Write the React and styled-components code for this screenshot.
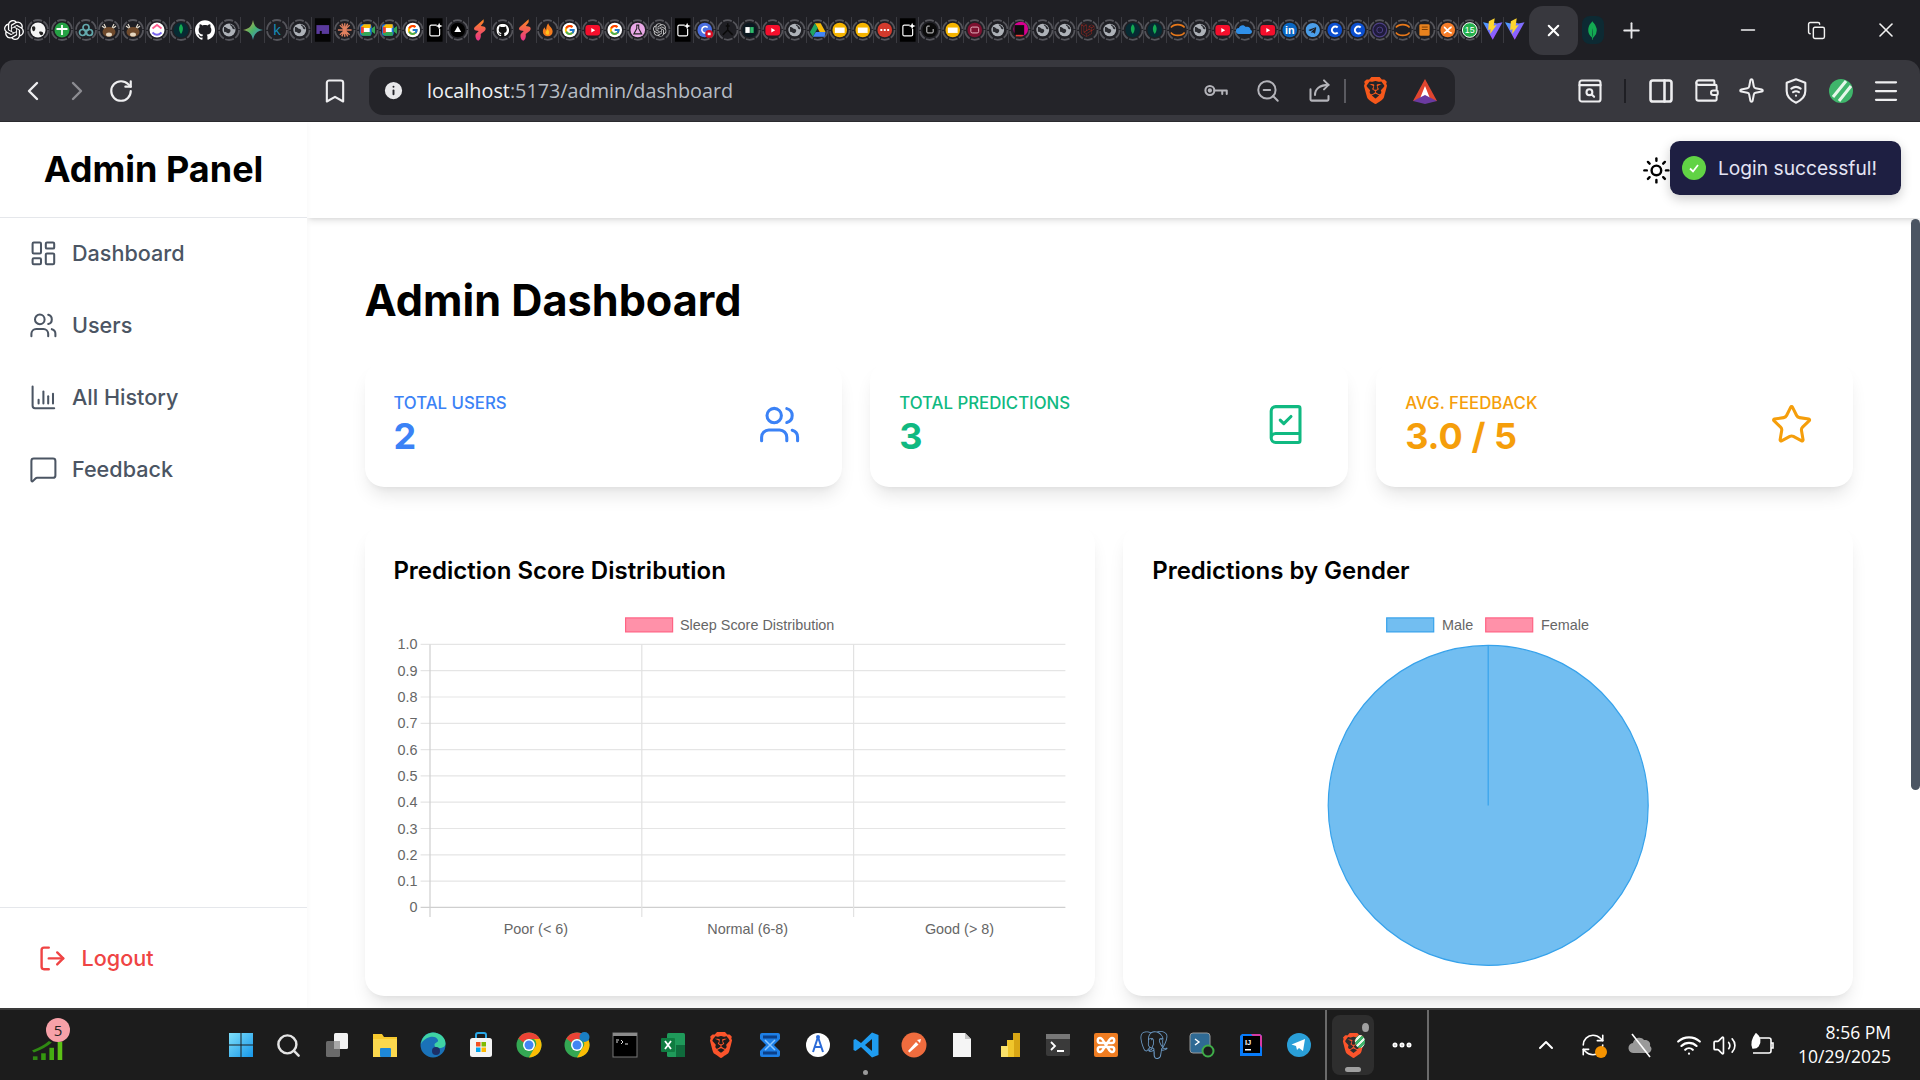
import React from "react";
import styled, { createGlobalStyle } from "styled-components";
import {
  LayoutDashboard,
  Users,
  MessageSquare,
  LogOut,
  BookCheck,
  Star,
  Sun,
  ChevronLeft,
  ChevronRight,
  RotateCw,
  Bookmark,
  Info,
  ZoomOut,
  X,
  Plus,
  Minus,
  Copy,
  PanelRight,
  Wallet,
  Sparkle,
  Menu,
  Search,
  ChevronUp,
  RefreshCw,
  Wifi,
  Volume2,
  MoreHorizontal,
} from "lucide-react";
import {
  SiOpenai,
  SiMongodb,
  SiGithub,
  SiLaravel,
  SiBrave,
  SiPostgresql,
} from "react-icons/si";
import { FaTelegram } from "react-icons/fa";
import { FcGoogle } from "react-icons/fc";

const GlobalStyle = createGlobalStyle`
  html, body {
    margin: 0;
    height: 100%;
    overflow: hidden;
    background: #fff;
  }
  * {
    box-sizing: border-box;
  }
  #root {
    height: 100%;
  }
`;

const Screen = styled.div`
  display: flex;
  flex-direction: column;
  width: 1920px;
  height: 1080px;
  font-family: Inter, "Liberation Sans", sans-serif;
  background: #1f1f24;
`;

/* browser chrome */

const TabStrip = styled.div`
  display: flex;
  align-items: center;
  height: 60px;
  padding-left: 1.4px;
  flex: none;
`;

const TabCell = styled.div`
  display: flex;
  align-items: center;
  justify-content: center;
  width: ${(p) => (p.$wide ? 23.9 : 22.5)}px;
  height: 26px;
  flex: none;
  border-left: 1px solid ${(p) => (p.$first ? "transparent" : "#3a3a40")};
`;

const ActiveTab = styled.div`
  display: flex;
  align-items: center;
  justify-content: center;
  width: 49px;
  height: 49px;
  margin-left: 3px;
  border-radius: 14px;
  background: #38383e;
  color: #fff;
  flex: none;
`;

const PinnedTile = styled.div`
  display: flex;
  align-items: center;
  justify-content: center;
  width: 22px;
  height: 28px;
  margin-left: 4px;
  border-radius: 8px;
  background: #0d2a33;
  color: #13aa52;
  flex: none;
`;

const NewTab = styled.div`
  display: flex;
  justify-content: center;
  width: 34px;
  margin-left: 11px;
  color: #e8e8ea;
`;

const WindowControls = styled.div`
  display: flex;
  align-items: center;
  margin-left: auto;
`;

const WindowButton = styled.div`
  display: flex;
  justify-content: center;
  width: 69px;
  color: #f2f2f2;
`;

const Toolbar = styled.div`
  display: flex;
  align-items: center;
  height: 62px;
  padding-left: 11px;
  flex: none;
  background: #38383e;
  border-radius: 14px 14px 0 0;
  border-bottom: 1px solid #2a2a2e;
`;

const ToolButton = styled.div`
  display: flex;
  align-items: center;
  justify-content: center;
  width: 44px;
  height: 44px;
  flex: none;
  color: ${(p) => p.$color || "#eeeef0"};
`;

const BookmarkSlot = styled(ToolButton)`
  margin-left: 170px;
  margin-right: 12px;
`;

const UrlPill = styled.div`
  display: flex;
  align-items: center;
  width: 1086px;
  height: 48px;
  padding-left: 13px;
  flex: none;
  border-radius: 14px;
  background: #242429;
`;

const InfoSlot = styled.div`
  display: flex;
  color: #e8e8ea;
  margin-right: 22px;
`;

const UrlText = styled.div`
  font-family: "Open Sans", "Liberation Sans", sans-serif;
  font-size: 19.8px;
  color: #b6bcc4;
  white-space: nowrap;
`;

const UrlHost = styled.span`
  color: #eef1f4;
`;

const PillActions = styled.div`
  display: flex;
  align-items: center;
  margin-left: auto;
  padding-right: 9px;
`;

const PillButton = styled.div`
  display: flex;
  justify-content: center;
  width: ${(p) => p.$w || 51}px;
  color: #b4b4ba;
`;

const ToolDivider = styled.div`
  width: 2px;
  height: 24px;
  margin: 0 ${(p) => p.$gap || 0}px;
  background: ${(p) => p.$color || "#5a5a60"};
  flex: none;
`;

const ToolRight = styled.div`
  display: flex;
  align-items: center;
  margin-left: 112px;
`;

const ToolRightButton = styled.div`
  display: flex;
  justify-content: center;
  width: 45px;
  color: #eeeef0;
  flex: none;
`;

/* app page */

const Page = styled.div`
  display: flex;
  height: 886px;
  flex: none;
  background: #fff;
  overflow: hidden;
`;

const Sidebar = styled.aside`
  display: flex;
  flex-direction: column;
  width: 307px;
  flex: none;
  background: #fff;
  box-shadow: 0 0 6px rgba(0, 0, 0, 0.04);
  z-index: 3;
`;

const Brand = styled.div`
  display: flex;
  align-items: center;
  justify-content: center;
  height: 96px;
  padding-bottom: 2px;
  flex: none;
  border-bottom: 1.2px solid #e5e7eb;
  font-size: 36px;
  font-weight: 700;
  color: #000;
`;

const Nav = styled.nav`
  display: flex;
  flex-direction: column;
  gap: 24px;
  padding-top: 11px;
  flex: 1;
`;

const NavItem = styled.div`
  display: flex;
  align-items: center;
  gap: 14.4px;
  height: 48px;
  padding-left: 28.8px;
  font-size: 21.6px;
  font-weight: 500;
  color: #4b5563;
`;

const SidebarFoot = styled.div`
  display: flex;
  align-items: center;
  gap: 14.4px;
  height: 101px;
  padding: 0 0 0 38.4px;
  flex: none;
  border-top: 1.2px solid #e5e7eb;
  font-size: 21.6px;
  font-weight: 500;
  color: #ef4444;
`;

const Main = styled.div`
  display: flex;
  flex-direction: column;
  flex: 1;
  min-width: 0;
  position: relative;
`;

const Header = styled.header`
  display: flex;
  align-items: center;
  justify-content: flex-end;
  height: 96px;
  padding-right: 249px;
  flex: none;
  background: #fff;
  box-shadow: 0 4px 7px -1px rgba(0, 0, 0, 0.1), 0 2px 4px -2px rgba(0, 0, 0, 0.1);
  z-index: 2;
  color: #000;
`;

const Toast = styled.div`
  position: absolute;
  top: 19px;
  right: 19px;
  display: flex;
  align-items: center;
  gap: 12px;
  width: 231px;
  height: 54px;
  padding-left: 12px;
  border-radius: 9.6px;
  background: #1e1f42;
  color: #e4e4f4;
  font-size: 19.2px;
  box-shadow: 0 4px 12px rgba(0, 0, 0, 0.2);
  z-index: 5;
`;

const ToastIcon = styled.div`
  display: flex;
  align-items: center;
  justify-content: center;
  width: 24px;
  height: 24px;
  border-radius: 50%;
  background: #61d345;
  flex: none;
`;

const Content = styled.main`
  flex: 1;
  min-height: 0;
  overflow: hidden;
  padding: 57.6px 66.6px 0 57.6px;
  background: #fff;
`;

const ScrollThumb = styled.div`
  position: absolute;
  top: 97px;
  right: 0;
  width: 9px;
  height: 571px;
  border-radius: 5px;
  background: #4b5563;
  z-index: 4;
`;

const PageTitle = styled.h1`
  margin: 0 0 38.4px;
  font-size: 43.2px;
  line-height: 48px;
  font-weight: 700;
  color: #000;
`;

const StatGrid = styled.div`
  display: grid;
  grid-template-columns: repeat(3, 1fr);
  gap: 28.8px;
`;

const StatCard = styled.div`
  display: flex;
  align-items: center;
  justify-content: space-between;
  padding: 28.8px 40px 28.8px 28.8px;
  border-radius: 19.2px;
  background: #fff;
  color: ${(p) => p.$color};
  box-shadow: 0 12px 18px -4px rgba(0, 0, 0, 0.1), 0 5px 7px -5px rgba(0, 0, 0, 0.08);
`;

const StatLabel = styled.div`
  font-size: 16.8px;
  line-height: 24px;
  font-weight: 500;
  text-transform: uppercase;
`;

const StatValue = styled.div`
  font-size: 36px;
  line-height: 43.2px;
  font-weight: 700;
`;

const ChartGrid = styled.div`
  display: grid;
  grid-template-columns: repeat(2, 1fr);
  gap: 28.8px;
  margin-top: 38.4px;
`;

const ChartCard = styled.section`
  padding: 28.8px;
  border-radius: 19.2px;
  background: #fff;
  box-shadow: 0 12px 18px -4px rgba(0, 0, 0, 0.1), 0 5px 7px -5px rgba(0, 0, 0, 0.08);
`;

const ChartTitle = styled.h2`
  margin: 0 0 19.8px;
  font-size: 24px;
  line-height: 33.6px;
  font-weight: 600;
  color: #000;
`;

const ChartSvg = styled.svg`
  display: block;
  width: 672px;
  height: 360px;
  overflow: visible;
  font-family: "Liberation Sans", Arial, sans-serif;
  font-size: 14.4px;
  fill: #666;
`;

/* taskbar */

const Taskbar = styled.footer`
  display: flex;
  align-items: center;
  height: 72px;
  flex: none;
  background: #1c1c1c;
  border-top: 2px solid #3a3a3a;
`;

const SignalWidget = styled.div`
  position: relative;
  display: flex;
  align-items: flex-end;
  width: 216.5px;
  height: 70px;
  padding: 0 0 20px 32px;
  flex: none;
`;

const SignalBadge = styled.div`
  position: absolute;
  top: 8px;
  left: 46px;
  display: flex;
  align-items: center;
  justify-content: center;
  width: 24px;
  height: 24px;
  border-radius: 50%;
  background: #f7a1a8;
  color: #222;
  font-family: "Open Sans", sans-serif;
  font-size: 15px;
`;

const TaskCell = styled.div`
  position: relative;
  display: flex;
  align-items: center;
  justify-content: center;
  width: 48.1px;
  height: 70px;
  flex: none;
`;

const RunDot = styled.div`
  position: absolute;
  bottom: 5px;
  left: 21.5px;
  width: 5px;
  height: 5px;
  border-radius: 50%;
  background: #9a9a9a;
`;

const Separator = styled.div`
  width: 2px;
  height: 70px;
  background: #6a6a6a;
  flex: none;
  margin-left: ${(p) => p.$left || 0}px;
`;

const ActiveApp = styled.div`
  position: relative;
  display: flex;
  align-items: center;
  justify-content: center;
  width: 42px;
  height: 60px;
  margin-left: 5px;
  border-radius: 8px;
  background: #2e2e2e;
  flex: none;
`;

const ActivePill = styled.div`
  position: absolute;
  bottom: 3px;
  left: 13px;
  width: 16px;
  height: 5px;
  border-radius: 3px;
  background: #a0a0a0;
`;

const AppBadge = styled.div`
  position: absolute;
  top: 8px;
  right: 5px;
  width: 7px;
  height: 9px;
  border-radius: 50%;
  background: #a0a0a0;
`;

const AppExtension = styled.div`
  position: absolute;
  top: 20px;
  right: 9px;
  width: 10px;
  height: 13px;
  border-radius: 50%;
  background: repeating-linear-gradient(135deg, #3fb56b 0 3px, #e6f7ea 3px 5px);
`;

const DotsCell = styled.div`
  display: flex;
  justify-content: center;
  width: 49px;
  margin-left: 3px;
  color: #fff;
  flex: none;
`;

const Tray = styled.div`
  display: flex;
  align-items: center;
  color: #fff;
  margin-left: 93px;
`;

const TrayCell = styled.div`
  position: relative;
  display: flex;
  justify-content: center;
  width: ${(p) => p.$w || 47.5}px;
  margin-left: ${(p) => p.$gap || 0}px;
  flex: none;
`;

const TrayDot = styled.div`
  position: absolute;
  right: 10px;
  bottom: 0;
  width: 12px;
  height: 12px;
  border-radius: 50%;
  background: #f59300;
`;

const Clock = styled.div`
  margin-left: auto;
  padding: 0 29px 2px 0;
  font-family: "Open Sans", "Liberation Sans", sans-serif;
  font-size: 17.5px;
  line-height: 24px;
  text-align: right;
  color: #fff;
`;

/* small drawings */

const Globe = () => (
  <g>
    <circle cx="11" cy="12" r="6.5" fill="#aeb2b8" />
    <path d="M6 9c3 0 3 2 5 2s2 3 0 4-3-2-5-1zM12 6c2 1 4 2 5 5-2 1-3-1-3-2s-2-1-2-3z" fill="#2a2b30" />
  </g>
);

const YouTube = () => (
  <g>
    <rect x="3.5" y="7" width="15" height="10.5" rx="3" fill="#f50f2c" />
    <path d="M9.5 10v4.5l4-2.2z" fill="#fff" />
  </g>
);

const GoogleG = () => (
  <g>
    <circle cx="11" cy="12" r="7.5" fill="#fff" />
    <FcGoogle x="5" y="6" size="12" />
  </g>
);

const YellowNote = () => (
  <g>
    <circle cx="11" cy="12" r="7.5" fill="#f5b400" />
    <rect x="6" y="9.5" width="10" height="5.5" fill="#fff" />
  </g>
);

const CStar = () => (
  <g>
    <rect x="3" y="0" width="16" height="24" fill="#000" />
    <path d="M13 7H7.5A1.5 1.5 0 0 0 6 8.5v8A1.5 1.5 0 0 0 7.5 18h7a1.5 1.5 0 0 0 1.5-1.5V11" fill="none" stroke="#fff" strokeWidth="1.2" />
    <path d="M15.5 4.5l1 2.5 2.5 1-2.5 1-1 2.5-1-2.5-2.5-1 2.5-1z" fill="#fff" />
  </g>
);

const Eclipse = () => (
  <g fill="none" stroke="#e8781a" strokeWidth="1.6">
    <path d="M4 9.5c3-4 11-4 14 0" />
    <path d="M4 14.5c3 4 11 4 14 0" />
  </g>
);

const Mongo = () => (
  <g>
    <circle cx="11" cy="12" r="7.5" fill="#062b33" />
    <path d="M11 6c2.5 2.5 2.6 6.5 0 10-2.6-3.5-2.5-7.5 0-10z" fill="#13aa52" />
  </g>
);

const MeetCam = () => (
  <g>
    <rect x="4" y="7" width="10" height="10" rx="1.5" fill="#fff" stroke="#1a73e8" strokeWidth="2" />
    <path d="M4 9l3-3h7v4H4z" fill="#fbbc04" />
    <path d="M4 14v2l2 2h8v-4z" fill="#34a853" />
    <path d="M15 10.5l3.5-2.5v8l-3.5-2.5z" fill="#34a853" />
    <path d="M4 9h3v6H4z" fill="#ea4335" />
  </g>
);

const Spark = () => (
  <path d="M15 1 6 9c-1.5 1.5-1 3 1 3.5l3 .5-3 3c-1 2 0 6 2.5 7 2-1 3-4 2.5-7l4-3c2-2 1-4-1-4.5l-3-.5 3-4z" fill="url(#spark)" />
);

const Fire = () => (
  <g>
    <path d="M11.5 5c.5 3 4.5 4.5 4.5 8.5a5 5 0 0 1-10 0c0-2 1-3.2 2-4.2 0 1.5.6 2.2 1.4 2.5C9.4 9.5 10 7 11.5 5z" fill="#f57c1f" />
    <path d="M10.5 11c1.5 1.5 2.5 2.5 1.5 5.5-2 1-4-1-3-3 .7-.7 1.3-1.3 1.5-2.5z" fill="#ffc21a" />
  </g>
);

const Gemini = () => (
  <path d="M11 2c1 6 4 9 10 10-6 1-9 4-10 10-1-6-4-9-10-10 6-1 9-4 10-10z" fill="url(#gemini)" />
);

const Vite = () => (
  <g>
    <path d="M1 4l10 18L21 4l-6 1.3-4-1-4 1z" fill="url(#vite)" />
    <path d="M13 0 7 3l-.7 9 2.5-.8-.5 4.8L15 7l-3 .6z" fill="#ffd62e" />
  </g>
);

const glyphs = {
  gpt: () => <SiOpenai x="1" y="2" size="20" color="#fff" />,
  panda: () => (
    <g>
      <circle cx="11" cy="12" r="7.5" fill="#f4f4f4" />
      <path d="M5 9c3-2 4 1 3 3s-3 2-3-3zM12 14c2-1 5 0 4 2s-3 2-4-2z" fill="#222" />
    </g>
  ),
  plus: () => (
    <g>
      <circle cx="11" cy="12" r="7.5" fill="#25a244" />
      <path d="M11 7v10M5.5 11h11" stroke="#fff" strokeWidth="1.8" />
    </g>
  ),
  rings: () => (
    <g fill="none" stroke="#63a9ad" strokeWidth="1.7">
      <circle cx="11" cy="9.5" r="3" />
      <circle cx="7.5" cy="14.5" r="3" />
      <circle cx="14.5" cy="14.5" r="3" />
    </g>
  ),
  deer: () => (
    <g>
      <path d="M6 6l2 4M16 6l-2 4M4 8l4 3M18 8l-4 3" stroke="#e4ddcf" strokeWidth="1.2" />
      <ellipse cx="11" cy="14" rx="6.5" ry="5" fill="#6f4a2c" />
      <ellipse cx="11" cy="16.5" rx="3" ry="2" fill="#e6d7c0" />
    </g>
  ),
  clickup: () => (
    <g>
      <circle cx="11" cy="12" r="7.5" fill="#fff" />
      <path d="M6.5 10.5 11 7l4.5 3.5" fill="none" stroke="#ff5d8f" strokeWidth="1.8" />
      <path d="M6.5 14.5c3 3 6 3 9 0" fill="none" stroke="#7b68ee" strokeWidth="1.8" />
    </g>
  ),
  mongo: Mongo,
  github: () => <SiGithub x="1" y="2" size="20" color="#fff" />,
  globe: Globe,
  gemini: Gemini,
  k: () => (
    <text x="11" y="17" textAnchor="middle" fontFamily="Liberation Sans" fontSize="15" fill="#1688b4">k</text>
  ),
  cyber: () => (
    <g>
      <rect x="3" y="0" width="16" height="24" fill="#050505" />
      <rect x="4.5" y="7" width="13" height="9" fill="#5a3a9c" />
      <rect x="8" y="13" width="2" height="4" fill="#050505" />
    </g>
  ),
  claude: () => (
    <path d="M11 5v14M4 12h14M6 7l10 10M16 7 6 17M8 5.5l6 13M14 5.5l-6 13" stroke="#e0805f" strokeWidth="1.4" />
  ),
  meet: MeetCam,
  google: GoogleG,
  cstar: CStar,
  tri: () => (
    <g>
      <circle cx="11" cy="12" r="7.5" fill="#000" />
      <path d="M11 8l3.5 6h-7z" fill="#fff" />
    </g>
  ),
  spark: Spark,
  githubRing: () => (
    <g>
      <circle cx="11" cy="12" r="7.5" fill="#111" />
      <SiGithub x="4.5" y="5.5" size="13" color="#fff" />
    </g>
  ),
  fire: Fire,
  yt: YouTube,
  flask: () => (
    <g>
      <circle cx="11" cy="12" r="7.5" fill="#e9a8e6" />
      <path d="M9.5 7h3M10 7v3.5L7 16h8l-3-5.5V7" fill="none" stroke="#222" strokeWidth="1.1" />
    </g>
  ),
  gptGrey: () => <SiOpenai x="4" y="5" size="14" color="#c9c9c9" />,
  gred: () => (
    <g>
      <circle cx="11" cy="12" r="7.5" fill="#4a6ee0" />
      <path d="M8 12a3.5 3.5 0 0 1 6-2.5M8 12a3.5 3.5 0 0 0 4 3" fill="none" stroke="#fff" strokeWidth="1.6" />
      <circle cx="15.5" cy="16" r="4" fill="#d50f25" />
      <rect x="14" y="14.7" width="3" height="2.6" fill="#fff" />
    </g>
  ),
  tripod: () => <path d="M11 5v7L6 17M11 12l5 5M9 8h4" fill="none" stroke="#0a0a0a" strokeWidth="1.5" />,
  h: () => (
    <g>
      <circle cx="11" cy="12" r="7.5" fill="#0b1820" />
      <rect x="6.5" y="9" width="4.5" height="6" fill="#fff" />
      <rect x="11.5" y="9" width="3.5" height="6" fill="#2ebd6b" />
    </g>
  ),
  drive: () => (
    <g>
      <path d="M8 5h6l5 9h-6z" fill="#f9bc07" />
      <path d="M8 5 3 14l3 5 5-9z" fill="#1fa463" />
      <path d="M6 19h12l1-5H9z" fill="#4285f4" />
    </g>
  ),
  note: YellowNote,
  dots: () => (
    <g>
      <circle cx="11" cy="12" r="7.5" fill="#d33a2c" />
      <path d="M6.5 12h9" stroke="#fff" strokeWidth="2" strokeDasharray="2 1.5" />
    </g>
  ),
  roundC: () => (
    <g>
      <circle cx="11" cy="12" r="7.5" fill="#0a0a0a" />
      <path d="M11 8H9a1 1 0 0 0-1 1v5a1 1 0 0 0 1 1h4.5a1 1 0 0 0 1-1v-3" fill="none" stroke="#ddd" strokeWidth="1" />
    </g>
  ),
  maroon: () => (
    <g>
      <circle cx="11" cy="12" r="7.5" fill="#7d1130" />
      <rect x="7" y="9" width="8" height="6" rx="1.5" fill="none" stroke="#e9b7c3" strokeWidth="1" />
    </g>
  ),
  pink: () => (
    <g>
      <circle cx="12" cy="11" r="7.5" fill="#d6008f" />
      <rect x="5.5" y="7" width="10" height="10" fill="#0d0d0d" />
      <rect x="7" y="17" width="7" height="1.5" fill="#f03a2e" />
    </g>
  ),
  laravel: () => <SiLaravel x="4" y="5" size="14" color="#a8281f" />,
  eclipse: Eclipse,
  onedrive: () => (
    <path d="M5 16a3 3 0 0 1 0-6c1-3 5-4 7-1 3-1 5 1 5 3 2 0 2 4-1 4z" fill="#2f8fe8" />
  ),
  linkedin: () => (
    <g>
      <circle cx="11" cy="12" r="7.5" fill="#0a66c2" />
      <text x="11" y="16.5" textAnchor="middle" fontFamily="Liberation Sans" fontWeight="700" fontSize="11" fill="#fff">in</text>
    </g>
  ),
  telegram: () => <FaTelegram x="3.5" y="4.5" size="15" color="#4a9eea" />,
  c: () => (
    <g>
      <circle cx="11" cy="12" r="7.5" fill="#0b4fd0" />
      <path d="M14 9.5a3.5 3.5 0 1 0 0 5" fill="none" stroke="#fff" strokeWidth="2" />
    </g>
  ),
  purple: () => (
    <g>
      <circle cx="11" cy="12" r="7" fill="#1f1b3a" stroke="#4d3f85" strokeWidth="1.2" />
      <circle cx="11" cy="12" r="3" fill="none" stroke="#4d3f85" />
    </g>
  ),
  book: () => (
    <g>
      <rect x="5.5" y="6" width="10.5" height="12" rx="1.5" fill="#e8821e" />
      <path d="M8 9h6M8 11.5h6" stroke="#7a3d05" strokeWidth="1" />
    </g>
  ),
  xampp: () => (
    <g>
      <circle cx="11" cy="12" r="7.5" fill="#f57c28" />
      <path d="M7 9c2 0 4 6 8 6M15 9c-2 0-6 6-8 6" fill="none" stroke="#fff" strokeWidth="1.8" />
    </g>
  ),
  fifteen: () => (
    <g>
      <circle cx="11" cy="12" r="7.5" fill="#22b04b" stroke="#fff" strokeWidth="1" />
      <text x="11" y="15.5" textAnchor="middle" fontFamily="Liberation Sans" fontSize="9" fill="#fff">15</text>
    </g>
  ),
  vite: Vite,
};

const tabs = [
  "gpt", "panda", "plus", "rings", "deer", "deer", "clickup", "mongo", "github", "globe", "gemini", "k",
  "globe", "cyber", "claude", "meet", "meet", "google", "cstar", "tri", "spark", "githubRing", "spark", "fire",
  "google", "yt", "google", "flask", "gptGrey", "cstar", "gred", "tripod", "h", "yt", "globe", "drive",
  "note", "note", "dots", "cstar", "roundC", "note", "maroon", "globe", "pink", "globe", "globe", "laravel",
  "globe", "mongo", "mongo", "eclipse", "globe", "yt", "onedrive", "yt", "linkedin", "telegram", "c", "c",
  "purple", "eclipse", "book", "xampp", "fifteen", "vite", "vite",
];

const noRing = ["gpt", "github", "gemini", "cyber", "spark", "cstar", "vite"];

const Favicon = ({ kind, index }) => {
  const Glyph = glyphs[kind];
  return (
    <TabCell $first={index === 0} $wide={index < 12}>
      <svg width="22" height="24" viewBox="0 0 22 24">
        <defs>
          <linearGradient id="spark" x1="0" y1="0" x2="0" y2="1">
            <stop offset="0" stopColor="#ff8a1f" />
            <stop offset="1" stopColor="#e8318a" />
          </linearGradient>
          <linearGradient id="gemini" x1="0" y1="0" x2="1" y2="1">
            <stop offset="0" stopColor="#f2a53a" />
            <stop offset="0.5" stopColor="#49b36a" />
            <stop offset="1" stopColor="#3b7cf4" />
          </linearGradient>
          <linearGradient id="vite" x1="0" y1="0" x2="1" y2="1">
            <stop offset="0" stopColor="#41a5ff" />
            <stop offset="1" stopColor="#bd34fe" />
          </linearGradient>
        </defs>
        {!noRing.includes(kind) && (
          <circle cx="11" cy="12" r="10" fill="none" stroke="#55555b" strokeWidth="1.8" strokeDasharray="9 1.5" />
        )}
        <Glyph />
      </svg>
    </TabCell>
  );
};

const TaskIcon = ({ children }) => (
  <svg width="28" height="28" viewBox="0 0 28 28">
    {children}
  </svg>
);

const LineIcon = ({ size = 26, width = 1.8, children }) => (
  <svg width={size} height={size} viewBox="0 0 24 24" fill="none" stroke="currentColor" strokeWidth={width} strokeLinecap="round" strokeLinejoin="round">
    {children}
  </svg>
);

const BarHistory = ({ size }) => (
  <LineIcon size={size} width={1.7}>
    <path d="M3 3v16a2 2 0 0 0 2 2h16" />
    <path d="M8 17v-3" />
    <path d="M12 17V7" />
    <path d="M16 17v-6" />
    <path d="M20 17V9" />
  </LineIcon>
);

const taskApps = [
  <TaskIcon key="win">
    <defs>
      <linearGradient id="win" x1="0" y1="0" x2="1" y2="1">
        <stop offset="0" stopColor="#7fe0fb" />
        <stop offset="1" stopColor="#1696e8" />
      </linearGradient>
    </defs>
    <path d="M2 2h11.5v11.5H2zM14.5 2H26v11.5H14.5zM2 14.5h11.5V26H2zM14.5 14.5H26V26H14.5z" fill="url(#win)" />
  </TaskIcon>,
  <Search key="search" size={27} color="#e4e4e4" strokeWidth={2.2} />,
  <TaskIcon key="view">
    <rect x="11" y="2" width="14" height="16" rx="1.5" fill="#f2f2f2" />
    <rect x="3" y="10" width="14" height="16" rx="1.5" fill="#6a6a6a" />
    <rect x="11" y="10" width="6" height="8" fill="#a8a8a8" />
  </TaskIcon>,
  <TaskIcon key="folder">
    <path d="M2 3h9l2 3h13v20H2z" fill="#f7c92e" />
    <path d="M2 8h24v18H2z" fill="#fbd84e" />
    <rect x="9" y="17" width="11" height="9" rx="1" fill="#1e88d8" />
  </TaskIcon>,
  <TaskIcon key="edge">
    <circle cx="14" cy="14" r="12.5" fill="#1a72b8" />
    <path d="M2 13C3 5 9 1.5 14 1.5c7 0 12.5 5 12.5 11 0 3-2.5 4.5-6 4.500-2 0-5-.5-5-3 0-3 4-2 3.500-5C18 6 14 5 11 6 6 7.5 3.5 10 2 13z" fill="#3fd3a4" />
    <circle cx="17" cy="20" r="4" fill="#1c2f66" />
  </TaskIcon>,
  <TaskIcon key="store">
    <path d="M9 7V4a2 2 0 0 1 2-2h6a2 2 0 0 1 2 2v3" fill="none" stroke="#29a8e8" strokeWidth="2" />
    <rect x="3" y="7" width="22" height="19" rx="2.5" fill="#f4f4f4" />
    <rect x="9" y="11" width="4.5" height="4.5" fill="#f25022" />
    <rect x="14.5" y="11" width="4.5" height="4.5" fill="#7fba00" />
    <rect x="9" y="16.5" width="4.5" height="4.5" fill="#00a4ef" />
    <rect x="14.5" y="16.5" width="4.5" height="4.5" fill="#ffb900" />
  </TaskIcon>,
  <TaskIcon key="chrome">
    <circle cx="14" cy="14" r="12.5" fill="#34a853" />
    <path d="M14 1.5A12.5 12.5 0 0 1 25 8H14a6 6 0 0 0-5.500 3.500L3.300 7.600A12.500 12.500 0 0 1 14 1.500z" fill="#ea4335" />
    <path d="M25 8a12.5 12.5 0 0 1-11 18.5l5-9a6 6 0 0 0 0-9.500z" fill="#fbbc04" />
    <circle cx="14" cy="14" r="6" fill="#fff" />
    <circle cx="14" cy="14" r="4.5" fill="#4285f4" />
  </TaskIcon>,
  <TaskIcon key="chrome2">
    <circle cx="14" cy="14" r="12.5" fill="#34a853" />
    <path d="M14 1.5A12.5 12.5 0 0 1 25 8H14a6 6 0 0 0-5.500 3.500L3.300 7.600A12.500 12.500 0 0 1 14 1.500z" fill="#ea4335" />
    <path d="M25 8a12.5 12.5 0 0 1-11 18.5l5-9a6 6 0 0 0 0-9.500z" fill="#fbbc04" />
    <circle cx="14" cy="14" r="6" fill="#fff" />
    <circle cx="14" cy="14" r="4.5" fill="#4285f4" />
    <circle cx="21.5" cy="6" r="5" fill="#1a7fc4" />
  </TaskIcon>,
  <TaskIcon key="cmd">
    <rect x="2" y="2" width="24" height="24" fill="#000" stroke="#777" />
    <rect x="2" y="2" width="24" height="3" fill="#8a8a8a" />
    <path d="M5 9h3M5 11h2M10 9l2 2-2 2M14 13h3" stroke="#ddd" strokeWidth="1" fill="none" />
  </TaskIcon>,
  <TaskIcon key="excel">
    <rect x="8" y="2" width="18" height="24" rx="1.5" fill="#1f9a5a" />
    <rect x="17" y="14" width="9" height="12" fill="#0f6b3c" />
    <rect x="2" y="7" width="14" height="14" rx="1" fill="#107c41" />
    <path d="M6 10l6 8M12 10l-6 8" stroke="#fff" strokeWidth="1.8" />
  </TaskIcon>,
  <SiBrave key="brave" size={26} color="#fb542b" />,
  <TaskIcon key="stack">
    <path d="M6 2h16a2 2 0 0 1 2 2v4l-6 6 6 6v4a2 2 0 0 1-2 2H6a2 2 0 0 1-2-2v-4l6-6-6-6V4a2 2 0 0 1 2-2z" fill="#1d7fe6" />
    <path d="M7 6h14M7 22h14" stroke="#0b3f88" strokeWidth="3" />
    <path d="M9 9l10 10M19 9 9 19" stroke="#89c6ff" strokeWidth="1.5" />
  </TaskIcon>,
  <TaskIcon key="atom">
    <circle cx="14" cy="14" r="12" fill="#fff" />
    <path d="M14 6l-5 15M14 6l5 15M10.5 16h7" stroke="#2b6bd8" strokeWidth="2" fill="none" />
    <circle cx="14" cy="6" r="2" fill="#2b6bd8" />
  </TaskIcon>,
  <TaskIcon key="code">
    <path d="M20 1.5 9 12 3.5 8 1.5 9v10l2 1L9 16l11 10.5L26.5 24V4z" fill="#1f9cf0" />
    <path d="M20 8v12l-7-6z" fill="#1c1c1c" />
  </TaskIcon>,
  <TaskIcon key="postman">
    <circle cx="14" cy="14" r="12.5" fill="#ef6c3e" />
    <path d="M8 20l8-9 2.5 2.5-9 8zM17 9l4-1-1 4z" fill="#fff" />
  </TaskIcon>,
  <TaskIcon key="file">
    <path d="M5 2h12l6 6v18H5z" fill="#f5f5f5" />
    <path d="M17 2v6h6z" fill="#c4c4c4" />
  </TaskIcon>,
  <TaskIcon key="bi">
    <rect x="17" y="2" width="7" height="24" fill="#d8a615" />
    <rect x="11" y="9" width="7" height="17" fill="#f0c62c" />
    <rect x="5" y="15" width="7" height="11" fill="#fbe26a" />
  </TaskIcon>,
  <TaskIcon key="term">
    <rect x="2" y="3" width="24" height="22" rx="2" fill="#3a3a3a" />
    <rect x="2" y="3" width="24" height="5" fill="#777" />
    <path d="M7 11l4 4-4 4M13 20h7" stroke="#fff" strokeWidth="1.8" fill="none" />
  </TaskIcon>,
  <TaskIcon key="xampp">
    <rect x="2" y="2" width="24" height="24" rx="2" fill="#ef7d22" />
    <path d="M8 7c-3 0-3 5 0 5h12c3 0 3-5 0-5-3 0-4 5-6 7-2 2-3 7-6 7-3 0-3-5 0-5h12c3 0 3 5 0 5-3 0-4-5-6-7-2-2-3-7-6-7z" fill="none" stroke="#fff" strokeWidth="2.4" />
  </TaskIcon>,
  <SiPostgresql key="pg" size={28} color="#6d9cc8" />,
  <TaskIcon key="pycharm">
    <rect x="2" y="2" width="20" height="20" rx="3" fill="#2f6a94" stroke="#999" />
    <path d="M7 8l4 3-4 3" fill="none" stroke="#fff" strokeWidth="1.4" />
    <circle cx="20" cy="20" r="5.5" fill="#1c1c1c" stroke="#3fae49" strokeWidth="2" />
  </TaskIcon>,
  <TaskIcon key="ij">
    <path d="M5 3h18l2 2v20H3V5z" fill="#087cfa" />
    <path d="M14 3h9l2 2v12z" fill="#d63aa5" />
    <rect x="6" y="5" width="17" height="17" fill="#000" />
    <text x="8" y="14" fontFamily="Liberation Sans" fontWeight="700" fontSize="7.5" fill="#fff">IJ</text>
    <rect x="8" y="18" width="6" height="1.5" fill="#fff" />
  </TaskIcon>,
  <TaskIcon key="tg">
    <circle cx="14" cy="14" r="12" fill="#2a9fd8" />
    <path d="M6.5 13.5 20 8l-2 12-4-3-2 2-1-4z" fill="#fff" />
  </TaskIcon>,
];

const BarChart = () => {
  const left = 37;
  const right = 672.4;
  const top = 37.4;
  const step = 26.3;
  const ticks = ["1.0", "0.9", "0.8", "0.7", "0.6", "0.5", "0.4", "0.3", "0.2", "0.1", "0"];
  const categories = ["Poor (< 6)", "Normal (6-8)", "Good (> 8)"];
  const band = (right - left) / 3;
  return (
    <ChartSvg viewBox="0 0 672 360">
      <rect x="232.6" y="10.9" width="47" height="14" fill="rgba(255,99,132,0.7)" stroke="#ff6384" strokeWidth="1.2" />
      <text x="287" y="22.6">Sleep Score Distribution</text>
      {ticks.map((t, i) => (
        <g key={t}>
          <line x1="27.6" x2={right} y1={top + i * step} y2={top + i * step} stroke={i === 10 ? "#cfcfcf" : "#e5e5e5"} strokeWidth="1.2" />
          <text x="24.4" y={top + i * step + 5} textAnchor="end">{t}</text>
        </g>
      ))}
      {[0, 1, 2].map((i) => (
        <line key={i} x1={left + i * band} x2={left + i * band} y1={top} y2="310" stroke={i === 0 ? "#cfcfcf" : "#e2e2e2"} strokeWidth="1.2" />
      ))}
      {categories.map((c, i) => (
        <text key={c} x={left + band * (i + 0.5)} y="327" textAnchor="middle">{c}</text>
      ))}
    </ChartSvg>
  );
};

const PieChart = () => (
  <ChartSvg viewBox="0 0 672 360">
    <rect x="234.7" y="10.9" width="47" height="14" fill="rgba(54,162,235,0.7)" stroke="#36a2eb" strokeWidth="1.2" />
    <text x="290" y="22.6">Male</text>
    <rect x="333.7" y="10.9" width="47" height="14" fill="rgba(255,99,132,0.7)" stroke="#ff6384" strokeWidth="1.2" />
    <text x="389" y="22.6">Female</text>
    <circle cx="336.2" cy="198.4" r="160" fill="rgba(54,162,235,0.7)" stroke="#36a2eb" strokeWidth="1.2" />
    <line x1="336.2" x2="336.2" y1="38.4" y2="198.4" stroke="#36a2eb" strokeWidth="1.2" />
  </ChartSvg>
);

const stats = [
  { label: "Total Users", value: "2", color: "#3b82f6", Icon: Users },
  { label: "Total Predictions", value: "3", color: "#10b981", Icon: BookCheck },
  { label: "Avg. Feedback", value: "3.0 / 5", color: "#f59e0b", Icon: Star },
];

const navItems = [
  { label: "Dashboard", Icon: LayoutDashboard },
  { label: "Users", Icon: Users },
  { label: "All History", Icon: BarHistory },
  { label: "Feedback", Icon: MessageSquare },
];

export default function App() {
  return (
    <Screen>
      <GlobalStyle />
      <TabStrip>
        {tabs.map((kind, i) => (
          <Favicon key={i} kind={kind} index={i} />
        ))}
        <ActiveTab>
          <X size={19} strokeWidth={2.6} />
        </ActiveTab>
        <PinnedTile>
          <SiMongodb size={19} />
        </PinnedTile>
        <NewTab>
          <Plus size={25} strokeWidth={1.8} />
        </NewTab>
        <WindowControls>
          <WindowButton><Minus size={22} strokeWidth={1.8} /></WindowButton>
          <WindowButton><Copy size={19} strokeWidth={1.8} /></WindowButton>
          <WindowButton><X size={24} strokeWidth={1.6} /></WindowButton>
        </WindowControls>
      </TabStrip>

      <Toolbar>
        <ToolButton><ChevronLeft size={32} strokeWidth={1.8} /></ToolButton>
        <ToolButton $color="#8c8c92"><ChevronRight size={32} strokeWidth={1.8} /></ToolButton>
        <ToolButton><RotateCw size={26} strokeWidth={2} /></ToolButton>
        <BookmarkSlot><Bookmark size={28} strokeWidth={1.8} /></BookmarkSlot>
        <UrlPill>
          <InfoSlot>
            <Info size={23} fill="#e8e8ea" stroke="#242429" strokeWidth={2} />
          </InfoSlot>
          <UrlText>
            <UrlHost>localhost</UrlHost>:5173/admin/dashboard
          </UrlText>
          <PillActions>
            <PillButton>
              <LineIcon size={27}>
                <circle cx="7" cy="12" r="4" />
                <circle cx="7" cy="12" r="1" />
                <path d="M11 12h11v3M18 12v3" />
              </LineIcon>
            </PillButton>
            <PillButton $w={54}><ZoomOut size={26} strokeWidth={1.8} /></PillButton>
            <PillButton $w={49}>
              <LineIcon size={27}>
                <path d="M4 11v9a1 1 0 0 0 1 1h14a1 1 0 0 0 1-1v-3" />
                <path d="M8 16c0-5 4-9 12-9" />
                <path d="M16 3l4 4-4 4" />
              </LineIcon>
            </PillButton>
            <ToolDivider />
            <PillButton $w={58}><SiBrave size={27} color="#f6581b" /></PillButton>
            <PillButton $w={42}>
              <svg width="28" height="28" viewBox="0 0 28 28">
                <path d="M14 2 26 24H2z" fill="#e0452f" />
                <path d="M14 9 20 24H8z" fill="#fff" />
                <path d="M2 24 14 18 26 24 14 27z" fill="#6b3aa0" />
              </svg>
            </PillButton>
          </PillActions>
        </UrlPill>
        <ToolRight>
          <ToolRightButton>
            <LineIcon size={28}>
              <rect x="3" y="3" width="18" height="18" rx="2" />
              <path d="M3 7h18" />
              <circle cx="11.5" cy="13" r="2.5" />
              <path d="M13.5 15l2 2" />
            </LineIcon>
          </ToolRightButton>
          <ToolDivider $color="#1f1f24" $gap={12.4} />
          <ToolRightButton><PanelRight size={28} strokeWidth={2.2} /></ToolRightButton>
          <ToolRightButton><Wallet size={27} strokeWidth={1.8} /></ToolRightButton>
          <ToolRightButton><Sparkle size={27} strokeWidth={1.8} /></ToolRightButton>
          <ToolRightButton>
            <LineIcon size={28}>
              <path d="M12 2 4 5v7c0 5 3.5 8 8 10 4.5-2 8-5 8-10V5z" />
              <path d="M8 10c2.5-2 5.5-2 8 0M9.5 13c1.5-1 3.5-1 5 0" />
              <path d="M12 16h.01" />
            </LineIcon>
          </ToolRightButton>
          <ToolRightButton>
            <svg width="26" height="26" viewBox="0 0 26 26">
              <circle cx="13" cy="13" r="12" fill="#3fb56b" />
              <path d="M5 19 18 3M11 23 23 8" stroke="#e6f7ea" strokeWidth="3" />
            </svg>
          </ToolRightButton>
          <ToolRightButton><Menu size={30} strokeWidth={1.8} /></ToolRightButton>
        </ToolRight>
      </Toolbar>

      <Page>
        <Sidebar>
          <Brand>Admin Panel</Brand>
          <Nav>
            {navItems.map(({ label, Icon }) => (
              <NavItem key={label}>
                <Icon size={28.8} strokeWidth={1.7} />
                {label}
              </NavItem>
            ))}
          </Nav>
          <SidebarFoot>
            <LogOut size={28.8} strokeWidth={2} />
            Logout
          </SidebarFoot>
        </Sidebar>

        <Main>
          <Header>
            <Sun size={28.8} strokeWidth={2} />
          </Header>
          <Toast>
            <ToastIcon>
              <svg width="14" height="14" viewBox="0 0 14 14" fill="none" stroke="#fff" strokeWidth="1.8">
                <path d="M3 7.5 6 10.5 11 4" />
              </svg>
            </ToastIcon>
            Login successful!
          </Toast>
          <Content>
            <PageTitle>Admin Dashboard</PageTitle>
            <StatGrid>
              {stats.map(({ label, value, color, Icon }) => (
                <StatCard key={label} $color={color}>
                  <div>
                    <StatLabel>{label}</StatLabel>
                    <StatValue>{value}</StatValue>
                  </div>
                  <Icon size={43.2} strokeWidth={1.7} />
                </StatCard>
              ))}
            </StatGrid>
            <ChartGrid>
              <ChartCard>
                <ChartTitle>Prediction Score Distribution</ChartTitle>
                <BarChart />
              </ChartCard>
              <ChartCard>
                <ChartTitle>Predictions by Gender</ChartTitle>
                <PieChart />
              </ChartCard>
            </ChartGrid>
          </Content>
          <ScrollThumb />
        </Main>
      </Page>

      <Taskbar>
        <SignalWidget>
          <svg width="33" height="22" viewBox="0 0 36 36" preserveAspectRatio="none">
            <path d="M1 22C8 18 14 14 20 6" fill="none" stroke="#2f8a12" strokeWidth="4" />
            <rect x="1" y="30" width="5" height="6" fill="#2f8a12" />
            <rect x="10" y="25" width="5" height="11" fill="#35980f" />
            <rect x="19" y="16" width="5" height="20" fill="#45ad12" />
            <rect x="28" y="6" width="5" height="30" fill="#5cc116" />
          </svg>
          <SignalBadge>5</SignalBadge>
        </SignalWidget>
        {taskApps.map((icon, i) => (
          <TaskCell key={i}>
            {icon}
            {i === 13 && <RunDot />}
          </TaskCell>
        ))}
        <Separator $left={2.5} />
        <ActiveApp>
          <SiBrave size={25} color="#fb542b" />
          <AppBadge />
          <AppExtension />
          <ActivePill />
        </ActiveApp>
        <DotsCell><MoreHorizontal size={24} strokeWidth={3} /></DotsCell>
        <Separator $left={1} />
        <Tray>
          <TrayCell><ChevronUp size={24} /></TrayCell>
          <TrayCell><RefreshCw size={26} strokeWidth={1.5} /><TrayDot /></TrayCell>
          <TrayCell>
            <svg width="28" height="28" viewBox="0 0 28 28">
              <path d="M7 22a5 5 0 0 1-1-10c1-5 8-7 11-3 4-.5 7 2 6 6 3 2 1 7-2 7z" fill="#9a9a9a" />
              <path d="M5 3l18 23" stroke="#fff" strokeWidth="1.6" />
            </svg>
          </TrayCell>
          <TrayCell $w={36} $gap={6}><Wifi size={26} /></TrayCell>
          <TrayCell $w={36}><Volume2 size={25} strokeWidth={1.6} /></TrayCell>
          <TrayCell $w={36}>
            <svg width="28" height="28" viewBox="0 0 28 28" fill="none" stroke="#fff" strokeWidth="1.6">
              <path d="M12 7h10a2 2 0 0 1 2 2v11a2 2 0 0 1-2 2H6" />
              <path d="M24 12h2v5h-2" />
              <path d="M9 3c4 3 5 8 2 12-1 1.5-3 2-5 2-2-5 0-10 3-14z" fill="#fff" />
            </svg>
          </TrayCell>
        </Tray>
        <Clock>
          8:56 PM
          <br />
          10/29/2025
        </Clock>
      </Taskbar>
    </Screen>
  );
}
